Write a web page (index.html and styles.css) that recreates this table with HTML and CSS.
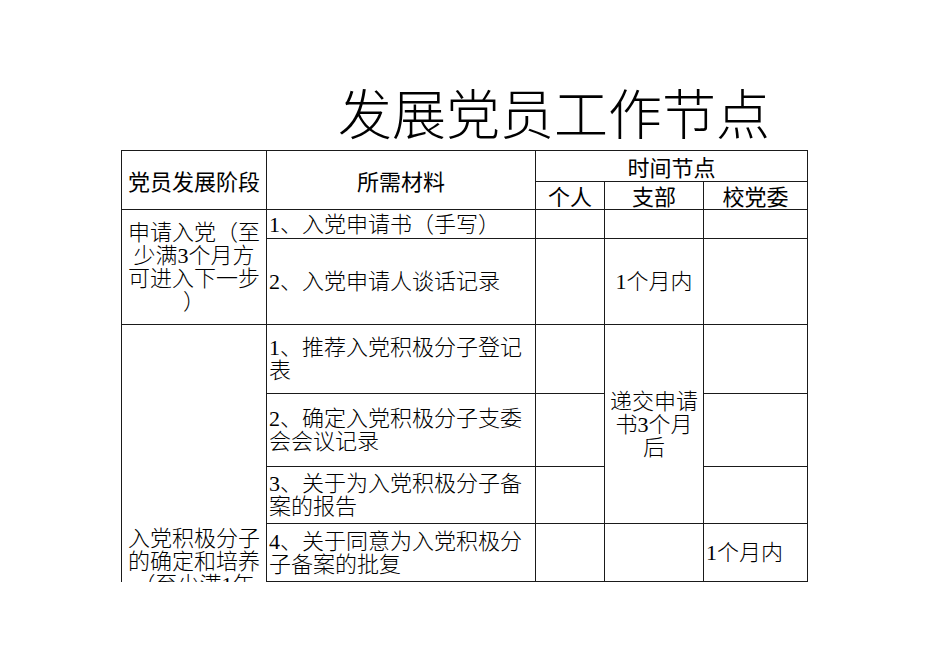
FILE: index.html
```html
<!DOCTYPE html>
<html lang="zh-CN">
<head>
<meta charset="utf-8">
<title>发展党员工作节点</title>
<link rel="stylesheet" href="styles.css">
</head>
<body>
<div class="page">
  <h1 class="title">发展党员工作节点</h1>
  <div class="sheet">
    <table class="grid">
      <colgroup>
        <col class="c-stage">
        <col class="c-mat">
        <col class="c-self">
        <col class="c-branch">
        <col class="c-school">
      </colgroup>
      <tr class="r-h1">
        <th rowspan="2" class="hd">党员发展阶段</th>
        <th rowspan="2" class="hd">所需材料</th>
        <th colspan="3" class="hd">时间节点</th>
      </tr>
      <tr class="r-h2">
        <th class="hd">个人</th>
        <th class="hd">支部</th>
        <th class="hd">校党委</th>
      </tr>
      <tr class="r-1">
        <td rowspan="2" class="stage">申请入党（至少满3个月方可进入下一步）</td>
        <td class="mat">1、入党申请书（手写）</td>
        <td></td>
        <td></td>
        <td></td>
      </tr>
      <tr class="r-2">
        <td class="mat">2、入党申请人谈话记录</td>
        <td></td>
        <td class="mid">1个月内</td>
        <td></td>
      </tr>
      <tr class="r-3">
        <td rowspan="5" class="stage">入党积极分子的确定和培养（至少满1年方可进入下一步）</td>
        <td class="mat">1、推荐入党积极分子登记表</td>
        <td></td>
        <td rowspan="3" class="mid">递交申请书3个月后</td>
        <td></td>
      </tr>
      <tr class="r-4">
        <td class="mat">2、确定入党积极分子支委会会议记录</td>
        <td></td>
        <td></td>
      </tr>
      <tr class="r-5">
        <td class="mat">3、关于为入党积极分子备案的报告</td>
        <td></td>
        <td></td>
      </tr>
      <tr class="r-6">
        <td class="mat">4、关于同意为入党积极分子备案的批复</td>
        <td></td>
        <td></td>
        <td class="mat">1个月内</td>
      </tr>
      <tr class="r-7">
        <td class="mat">5、入党积极分子培养教育考察登记表</td>
        <td></td>
        <td></td>
        <td></td>
      </tr>
    </table>
  </div>
</div>
</body>
</html>
```

FILE: styles.css
```css
html, body {
  margin: 0;
  padding: 0;
  background: #ffffff;
}

.page {
  width: 950px;
  height: 582px;
  overflow: hidden;
  font-family: "Liberation Serif", "Noto Sans CJK SC", serif;
  color: #000000;
}

.title {
  margin: 0;
  padding: 85px 0 0 338px;
  height: 54px;
  font-size: 54px;
  line-height: 54px;
  font-weight: 300;
  font-family: "Noto Sans CJK SC", sans-serif;
  letter-spacing: 0;
  white-space: nowrap;
}

.sheet {
  padding: 11px 0 0 121px;
}

.grid {
  border-collapse: collapse;
  table-layout: fixed;
  width: 686px;
}

.c-stage { width: 145px; }
.c-mat { width: 269px; }
.c-self { width: 69px; }
.c-branch { width: 99px; }
.c-school { width: 104px; }

.grid th,
.grid td {
  border: 1px solid #1a1a1a;
  padding: 0 2px;
  font-size: 22px;
  line-height: 23px;
  vertical-align: middle;
  word-break: break-all;
  line-break: anywhere;
}

.grid th.hd {
  font-family: "Noto Sans CJK SC", sans-serif;
  font-weight: 400;
  text-align: center;
  white-space: nowrap;
}

.grid td {
  font-weight: 300;
  text-align: left;
}

.grid td.stage {
  text-align: center;
}

.grid td.mid {
  text-align: center;
}

.grid td.mat {
  text-align: left;
}

.r-h1 { height: 31px; }
.r-h2 { height: 28px; }
.r-1 { height: 29px; }
.r-2 { height: 86px; }
.r-3 { height: 69px; }
.r-4 { height: 73px; }
.r-5 { height: 57px; }
.r-6 { height: 58px; }
.r-7 { height: 263px; }
```
